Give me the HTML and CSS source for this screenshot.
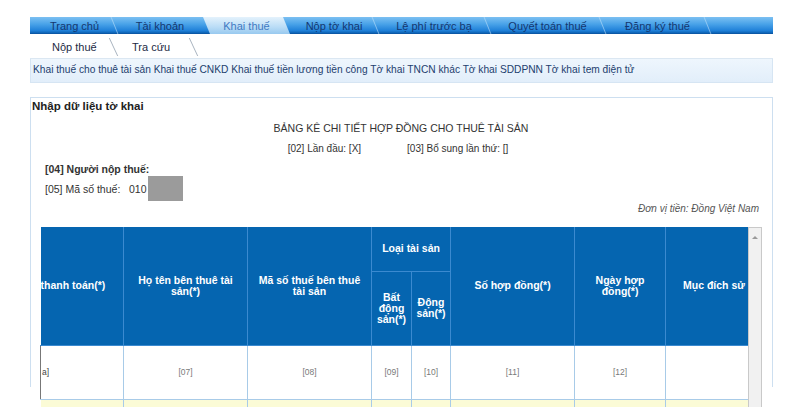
FILE: index.html
```html
<!DOCTYPE html>
<html lang="vi">
<head>
<meta charset="utf-8">
<title>Khai thuế</title>
<link rel="stylesheet" href="styles.css">
</head>
<body>
<div class="page">
  <nav class="topnav">
    <a class="tab t1">Trang chủ</a>
    <a class="tab t2">Tài khoản</a>
    <a class="tab t3 active">Khai thuế</a>
    <a class="tab t4">Nộp tờ khai</a>
    <a class="tab t5">Lệ phí trước bạ</a>
    <a class="tab t6">Quyết toán thuế</a>
    <a class="tab t7">Đăng ký thuế</a>
  </nav>
  <nav class="subnav">
    <a class="sub s1">Nộp thuế</a>
    <a class="sub s2">Tra cứu</a>
  </nav>
  <div class="linkbar">Khai thuế cho thuê tài sản Khai thuế CNKD Khai thuế tiền lương tiền công Tờ khai TNCN khác Tờ khai SDDPNN Tờ khai tem điện tử</div>

  <section class="panel">
    <div class="panel-head">Nhập dữ liệu tờ khai</div>
    <div class="panel-body">
      <div class="title">BẢNG KÊ CHI TIẾT HỢP ĐỒNG CHO THUÊ TÀI SẢN</div>
      <div class="subtitle"><span>[02] Lần đầu: [X]</span><span>[03] Bổ sung lần thứ: []</span></div>
      <div class="field bold">[04] Người nộp thuế:</div>
      <div class="field mst"><span class="lbl">[05] Mã số thuế:</span><span>010</span><span class="mask"></span></div>
      <div class="unit">Đơn vị tiền: Đồng Việt Nam</div>

      <div class="grid-wrap">
        <div class="scroller">
          <table class="grid">
            <colgroup>
              <col class="c1"><col class="c2"><col class="c3"><col class="c4"><col class="c5"><col class="c6"><col class="c7"><col class="c8">
            </colgroup>
            <thead>
              <tr class="h1">
                <th rowspan="2" class="left">thanh toán(*)</th>
                <th rowspan="2">Họ tên bên thuê tài sản(*)</th>
                <th rowspan="2" class="mid">Mã số thuế bên thuê tài sản</th>
                <th colspan="2" class="tight">Loại tài sản</th>
                <th rowspan="2">Số hợp đồng(*)</th>
                <th rowspan="2">Ngày hợp đồng(*)</th>
                <th rowspan="2" class="last">Mục đích sử</th>
              </tr>
              <tr class="h2">
                <th class="tight">Bất động sản(*)</th>
                <th class="tight">Động sản(*)</th>
              </tr>
            </thead>
            <tbody>
              <tr class="idx">
                <td class="left">a]</td>
                <td>[07]</td>
                <td>[08]</td>
                <td>[09]</td>
                <td>[10]</td>
                <td>[11]</td>
                <td>[12]</td>
                <td></td>
              </tr>
              <tr class="entry">
                <td></td><td></td><td></td><td></td><td></td><td></td><td></td><td></td>
              </tr>
            </tbody>
          </table>
        </div>
        <div class="vscroll"><span class="arrow"></span></div>
      </div>
    </div>
  </section>
</div>
</body>
</html>
```

FILE: styles.css
```css
* { box-sizing: border-box; }
html, body { margin: 0; padding: 0; background: #fff; overflow: hidden; }
body {
  font-family: "Liberation Sans", Arial, sans-serif;
  font-size: 11px;
  color: #222;
  height: 407px;
}
.page {
  width: 743px;
  margin-left: 30px;
  padding-top: 17px;
}

/* top navigation */
.topnav {
  display: flex;
  height: 17px;
  padding-left: 2px;
  background: linear-gradient(#7cc0f2 0%, #48a2e8 45%, #1f80d8 85%, #0d62b4 100%);
  border-bottom: 1px solid #0b58a6;
}
.tab {
  position: relative;
  display: flex;
  align-items: center;
  justify-content: center;
  height: 17px;
  color: #15376f;
  font-size: 11px;
  white-space: nowrap;
}
.tab::after {
  content: "";
  position: absolute;
  right: 2px;
  top: 0;
  width: 1px;
  height: 17px;
  background: rgba(190, 225, 250, 0.6);
  transform: skewX(22deg);
}
.tab.active::after, .tab.t2::after { display: none; }
.t1 { width: 85px; }
.t2 { width: 86px; }
.t3 { width: 87px; }
.t4 { width: 88px; }
.t5 { width: 112px; }
.t6 { width: 115px; }
.t7 { width: 105px; }
.tab.active {
  color: #3f79c2;
  background: linear-gradient(#e4f2fc, #b9dcf6 60%, #98c9ef);
  clip-path: polygon(0 0, calc(100% - 7px) 0, 100% 100%, 7px 100%);
}

/* sub navigation */
.subnav {
  display: flex;
  height: 25px;
  padding-left: 22px;
  padding-top: 2px;
  border-bottom: 1px solid #dbe7f2;
}
.sub {
  position: relative;
  display: flex;
  align-items: center;
  color: #1d2a44;
  font-size: 11px;
  white-space: nowrap;
}
.s1 { width: 80px; }
.s2 { width: 66px; }
.sub::after {
  content: "";
  position: absolute;
  right: 18px;
  top: 2px;
  width: 1px;
  height: 18px;
  background: #a9b4c0;
  transform: skewX(25deg);
}
.s2::after { right: 4px; }

/* link bar */
.linkbar {
  height: 24px;
  line-height: 22px;
  padding-left: 2px;
  background: linear-gradient(#eef6fd, #e2eefa);
  border: 1px solid #d6e5f3;
  border-top: none;
  color: #23406e;
  font-size: 10.2px;
  white-space: nowrap;
}

/* panel */
.panel {
  margin-top: 14px;
  border: 1px solid #cddff0;
  border-bottom: none;
  height: 290px;
}
.panel-head {
  height: 17px;
  line-height: 16px;
  padding-left: 1px;
  font-weight: bold;
  font-size: 11.5px;
  color: #222;
}
.panel-body {
  padding: 0 10px 0 9px;
}
.title {
  margin-top: 6px;
  height: 15px;
  line-height: 15px;
  text-align: center;
  font-size: 10.5px;
  color: #333;
}
.subtitle {
  margin-top: 6px;
  display: flex;
  justify-content: center;
  gap: 46px;
  height: 14px;
  line-height: 14px;
  font-size: 10px;
  color: #333;
  padding-right: 6px;
}
.field {
  margin-left: 5px;
  font-size: 10.5px;
  color: #333;
}
.field.bold {
  margin-top: 6px;
  height: 14px;
  line-height: 14px;
  font-weight: bold;
}
.field.mst {
  display: flex;
  align-items: center;
  height: 25px;
  margin-top: 0;
}
.mst .lbl { width: 84px; }
.mask {
  display: inline-block;
  width: 35px;
  height: 25px;
  background: #9b9b9b;
  margin-left: 1px;
}
.unit {
  margin-top: 1px;
  height: 14px;
  line-height: 14px;
  text-align: right;
  font-style: italic;
  font-size: 10px;
  color: #555;
  padding-right: 3px;
}

/* grid */
.grid-wrap {
  margin-top: 11px;
  display: flex;
  width: 722px;
  height: 180px;
  overflow: hidden;
}
.scroller {
  width: 708px;
  overflow: hidden;
  flex: none;
}
.grid {
  border-collapse: collapse;
  table-layout: fixed;
  width: 708px;
}
.c1 { width: 83px; }
.c2 { width: 124px; }
.c3 { width: 124px; }
.c4 { width: 40px; }
.c5 { width: 39px; }
.c6 { width: 124px; }
.c7 { width: 91px; }
.c8 { width: 83px; }
.grid th {
  background: #0565b0;
  color: #fff;
  font-weight: bold;
  font-size: 10.5px;
  line-height: 11px;
  border: 1px solid #3b8ad0;
  border-top: none;
  padding: 0 12px;
  text-align: center;
}
.grid th.left { text-align: left; padding-left: 0; }
.grid th.mid { padding: 0 8px; }
.grid th.tight { padding: 0 2px; }
.grid th.last { text-align: left; padding: 0 0 0 17px; white-space: nowrap; border-right: none; }
.grid tr.h1 { height: 44px; }
.grid tr.h2 { height: 74px; }
.grid td {
  border: 1px solid #a8cbe8;
  text-align: center;
  font-size: 8.5px;
  color: #7a7a7a;
}
.grid td.left { text-align: left; color: #444; }
.grid tr.idx { height: 54px; }
.grid tr.idx td { background: #fff; }
.grid tr.entry { height: 40px; }
.grid tr.entry td { background: #fbfbd6; }
.grid td:first-child, .grid th:first-child { border-left: none; }
.grid tr.idx td:first-child { border-left: 1px solid #777; }
.grid td:last-child { border-right: none; }

.vscroll {
  width: 14px;
  height: 200px;
  background: #f1f1f1;
  border: 1px solid #c9c9c9;
  display: flex;
  justify-content: center;
  padding-top: 8px;
}
.arrow {
  width: 0;
  height: 0;
  border-left: 3px solid transparent;
  border-right: 3px solid transparent;
  border-bottom: 3px solid #9a9a9a;
}
```
